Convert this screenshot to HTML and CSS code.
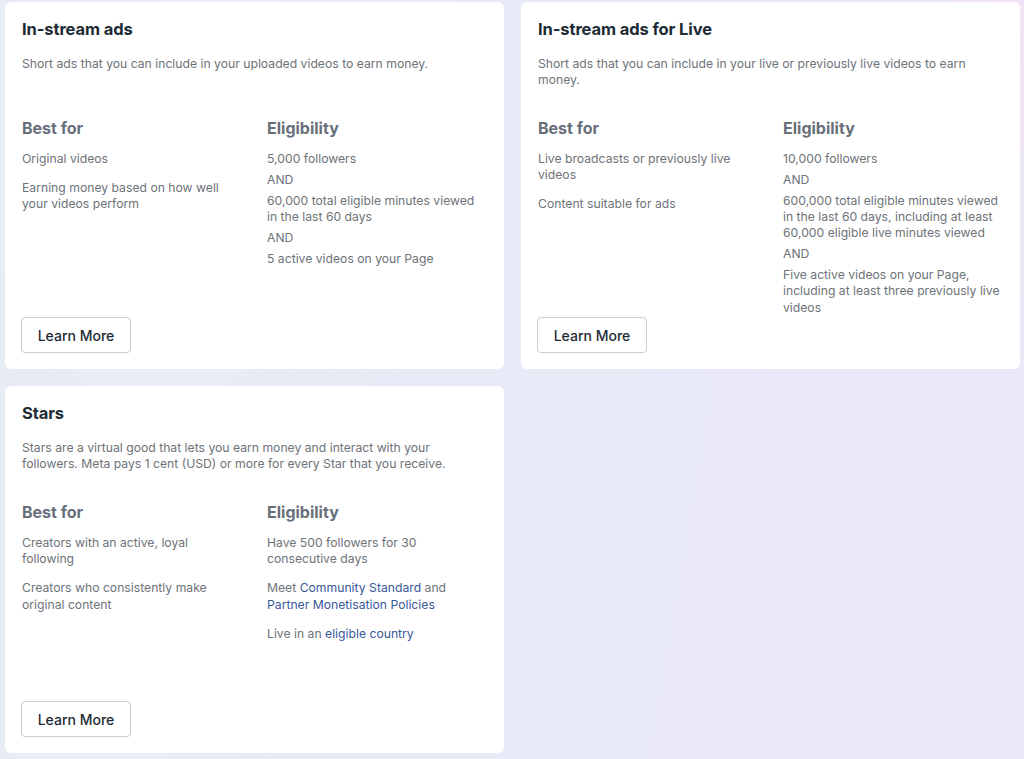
FILE: index.html
```html
<!DOCTYPE html>
<html lang="en">
<head>
<meta charset="utf-8">
<title>Monetisation</title>
<link rel="stylesheet" href="styles.css">
</head>
<body>
<main class="grid">
  <section class="card">
    <h2 class="title">In-stream ads</h2>
    <p class="desc">Short ads that you can include in your uploaded videos to earn money.</p>
    <div class="cols">
      <div class="col">
        <h3 class="head">Best for</h3>
        <ul class="list">
          <li>Original videos</li>
          <li>Earning money based on how well your videos perform</li>
        </ul>
      </div>
      <div class="col">
        <h3 class="head">Eligibility</h3>
        <ul class="list tight">
          <li>5,000 followers</li>
          <li>AND</li>
          <li>60,000 total eligible minutes viewed in the last 60 days</li>
          <li>AND</li>
          <li>5 active videos on your Page</li>
        </ul>
      </div>
    </div>
    <button class="btn">Learn More</button>
  </section>

  <section class="card">
    <h2 class="title">In-stream ads for Live</h2>
    <p class="desc">Short ads that you can include in your live or previously live videos to earn money.</p>
    <div class="cols">
      <div class="col">
        <h3 class="head">Best for</h3>
        <ul class="list">
          <li>Live broadcasts or previously live videos</li>
          <li>Content suitable for ads</li>
        </ul>
      </div>
      <div class="col">
        <h3 class="head">Eligibility</h3>
        <ul class="list tight">
          <li>10,000 followers</li>
          <li>AND</li>
          <li>600,000 total eligible minutes viewed in the last 60 days, including at least 60,000 eligible live minutes viewed</li>
          <li>AND</li>
          <li>Five active videos on your Page, including at least three previously live videos</li>
        </ul>
      </div>
    </div>
    <button class="btn">Learn More</button>
  </section>

  <section class="card">
    <h2 class="title">Stars</h2>
    <p class="desc">Stars are a virtual good that lets you earn money and interact with your followers. Meta pays 1 cent (USD) or more for every Star that you receive.</p>
    <div class="cols">
      <div class="col">
        <h3 class="head">Best for</h3>
        <ul class="list">
          <li>Creators with an active, loyal following</li>
          <li>Creators who consistently make original content</li>
        </ul>
      </div>
      <div class="col">
        <h3 class="head">Eligibility</h3>
        <ul class="list">
          <li>Have 500 followers for 30 consecutive days</li>
          <li>Meet <a class="link" href="#">Community Standard</a> and <a class="link" href="#">Partner Monetisation Policies</a></li>
          <li>Live in an <a class="link" href="#">eligible country</a></li>
        </ul>
      </div>
    </div>
    <button class="btn">Learn More</button>
  </section>
</main>
</body>
</html>
```
FILE: styles.css
```css
* { box-sizing: border-box; }
html, body { height: 100%; }
body {
  margin: 0;
  padding: 2px 0 0 5px;
  background:
    radial-gradient(ellipse 420px 300px at 100% 0%, rgba(240, 226, 244, 0.9), rgba(240, 226, 244, 0) 100%),
    linear-gradient(100deg, #e7edf4 0%, #e7ebf7 45%, #e9e8f8 75%, #ebe8f8 100%);
  font-family: Inter, "Noto Sans", Roboto, sans-serif;
  overflow: hidden;
}
.grid {
  display: grid;
  grid-template-columns: 499px 499px;
  grid-auto-rows: 367px;
  column-gap: 17px;
  row-gap: 17px;
}
.card {
  background: #fff;
  border-radius: 6px;
  padding: 16px 16px 16px 17px;
  display: flex;
  flex-direction: column;
}
.title {
  margin: 0 0 16px;
  font-size: 16.5px;
  line-height: 22px;
  font-weight: 700;
  color: #1c2b33;
  letter-spacing: -0.1px;
}
.desc {
  margin: 0 0 30px;
  min-height: 32px;
  font-size: 12.2px;
  line-height: 16px;
  color: #6d7378;
}
.cols {
  display: grid;
  grid-template-columns: 210px 218px;
  column-gap: 35px;
}
.head {
  margin: 0 0 13px;
  font-size: 16px;
  line-height: 20px;
  font-weight: 700;
  color: #67707a;
}
.list {
  list-style: none;
  margin: 0;
  padding: 0;
  display: flex;
  flex-direction: column;
  gap: 12.7px;
  font-size: 12.2px;
  line-height: 16.3px;
  color: #6d7378;
}
.list.tight { gap: 4.6px; }
.link { color: #385898; text-decoration: none; }
.btn {
  margin-top: auto;
  flex-shrink: 0;
  align-self: flex-start;
  width: 110px;
  height: 36px;
  margin-left: -1px;
  background: #fff;
  border: 1px solid #c9ced6;
  border-radius: 4px;
  font-family: Inter, "Noto Sans", sans-serif;
  font-size: 14px;
  font-weight: 500;
  color: #1c2b33;
  cursor: pointer;
}
```
